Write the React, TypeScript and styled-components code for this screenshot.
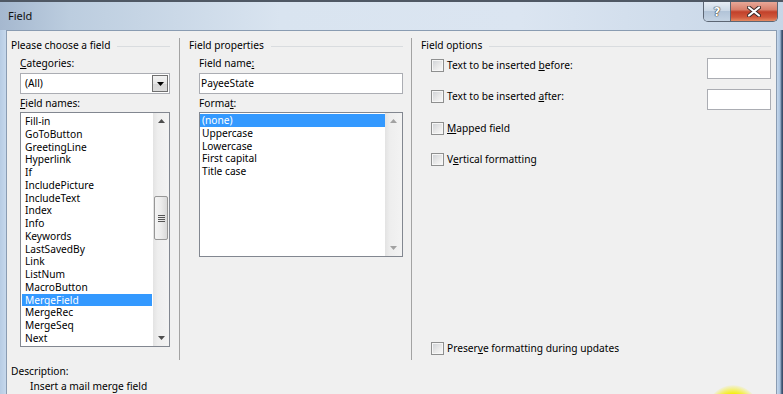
import React from 'react'
import styled, { createGlobalStyle } from 'styled-components'

const GlobalStyle = createGlobalStyle`
  html, body {
    margin: 0;
    padding: 0;
  }
  body {
    width: 783px;
    height: 394px;
    overflow: hidden;
    font-family: "Noto Sans", "Liberation Sans", sans-serif;
    font-size: 10.2px;
    color: #000;
  }
`

const fieldNames = [
    'Fill-in', 'GoToButton', 'GreetingLine', 'Hyperlink', 'If', 'IncludePicture',
    'IncludeText', 'Index', 'Info', 'Keywords', 'LastSavedBy', 'Link', 'ListNum',
    'MacroButton', 'MergeField', 'MergeRec', 'MergeSeq', 'Next',
]

const formats = ['(none)', 'Uppercase', 'Lowercase', 'First capital', 'Title case']

const Arrow = ({ up, color }: { up?: boolean; color: string }) => (
    <svg width="7" height="4" viewBox="0 0 7 4">
        {up
            ? <polygon points="0,4 7,4 3.5,0" fill={color} />
            : <polygon points="0,0 7,0 3.5,4" fill={color} />}
    </svg>
)

const Scroll = ({ thumbTop, disabled, width }: { thumbTop?: number; disabled?: boolean; width: number }) => {
    const c = disabled ? '#a2a2a2' : '#4e4e4e'
    return (
        <Scrollbar $w={width}>
            <ArrowBox><Arrow up color={c} /></ArrowBox>
            <Track>
                {thumbTop !== undefined && (
                    <Thumb $top={thumbTop}>
                        <svg width="7" height="7" viewBox="0 0 7 7">
                            <line x1="0" y1="0.5" x2="7" y2="0.5" stroke="#555" />
                            <line x1="0" y1="2.5" x2="7" y2="2.5" stroke="#555" />
                            <line x1="0" y1="4.5" x2="7" y2="4.5" stroke="#555" />
                            <line x1="0" y1="6.5" x2="7" y2="6.5" stroke="#555" />
                        </svg>
                    </Thumb>
                )}
            </Track>
            <ArrowBox><Arrow color={c} /></ArrowBox>
        </Scrollbar>
    )
}

const App = () => {
    return (
        <Window>
            <GlobalStyle />
            <TitleBar>
                <Title>Field</Title>
                <Caption>
                    <HelpButton>?</HelpButton>
                    <CloseButton>
                        <svg width="14" height="11" viewBox="0 0 14 11">
                            <path d="M2 1.5 L12 9.5 M12 1.5 L2 9.5" stroke="#3b2a28" strokeWidth="4" strokeLinecap="round" />
                            <path d="M2 1.5 L12 9.5 M12 1.5 L2 9.5" stroke="#fff" strokeWidth="2.2" strokeLinecap="round" />
                        </svg>
                    </CloseButton>
                </Caption>
            </TitleBar>

            <Client>
                <Columns>
                    <Column $pad={4} $sep>
                        <Heading $right={9}>Please choose a field</Heading>
                        <ColBody $indent={9}>
                            <Label $top={5}><u>C</u>ategories:</Label>
                            <Combo>
                                <ComboValue>(All)</ComboValue>
                                <DropButton><Arrow color="#000" /></DropButton>
                            </Combo>
                            <Label $top={3}><u>F</u>ield names:</Label>
                            <ListBox $w={150} $h={235}>
                                <ListItems $padTop={2} $padX={1}>
                                    {fieldNames.map((n) => (
                                        <Item key={n} $selected={n === 'MergeField'} $indent={3}>{n}</Item>
                                    ))}
                                </ListItems>
                                <Scroll width={16} thumbTop={67} />
                            </ListBox>
                        </ColBody>
                    </Column>

                    <Column $pad={9} $sep>
                        <Heading $right={8}>Field properties</Heading>
                        <ColBody $indent={10}>
                            <Label $top={5}>Field name<u>:</u></Label>
                            <TextBox $w={204}>PayeeState</TextBox>
                            <Label $top={3}>Forma<u>t</u>:</Label>
                            <ListBox $w={204} $h={145}>
                                <ListItems $padTop={1} $padX={0}>
                                    {formats.map((f) => (
                                        <Item key={f} $selected={f === '(none)'} $indent={2}>{f}</Item>
                                    ))}
                                </ListItems>
                                <Scroll width={17} disabled />
                            </ListBox>
                        </ColBody>
                    </Column>

                    <Column $pad={9}>
                        <Heading $right={5}>Field options</Heading>
                        <OptionsBody $indent={10}>
                            <OptionRow $top={6}>
                                <Check />
                                <OptionLabel>Text to be inserted <u>b</u>efore:</OptionLabel>
                                <SmallInput />
                            </OptionRow>
                            <OptionRow $top={10}>
                                <Check />
                                <OptionLabel>Text to be inserted <u>a</u>fter:</OptionLabel>
                                <SmallInput />
                            </OptionRow>
                            <OptionRow $top={11}>
                                <Check />
                                <OptionLabel><u>M</u>apped field</OptionLabel>
                            </OptionRow>
                            <OptionRow $top={17}>
                                <Check />
                                <OptionLabel>V<u>e</u>rtical formatting</OptionLabel>
                            </OptionRow>
                            <OptionRow $top={0} $bottom>
                                <Check />
                                <OptionLabel>Preser<u>v</u>e formatting during updates</OptionLabel>
                            </OptionRow>
                        </OptionsBody>
                    </Column>
                </Columns>

                <Description>
                    <DescLine>Description:</DescLine>
                    <DescLine $indent={19}>Insert a mail merge field</DescLine>
                </Description>
            </Client>

            <CursorGlow />
        </Window>
    )
}

export default App

const Window = styled.div`
position: relative;
width: 783px;
height: 394px;
overflow: hidden;
display: flex;
flex-direction: column;
background: linear-gradient(to right, #b7cce4 0, #c6d8ec 6px, #c6d8ec 777px, #a9c2de 780px, #3b4f6c 782px);
`
const TitleBar = styled.div`
height: 30px;
flex: none;
box-sizing: border-box;
display: flex;
align-items: flex-start;
border-top: 2px solid #4f5864;
background: linear-gradient(to right, #a5b8cf 0, #bccddf 70px, #d9e4f0 280px, #dbe5f1 520px, #c7d6e7 783px);
`
const Title = styled.div`
padding: 7px 0 0 8px;
line-height: 14px;
font-size: 11px;
color: #111;
`
const Caption = styled.div`
margin-left: auto;
margin-right: 5px;
height: 19px;
display: flex;
border: 1px solid #5c6674;
border-top: none;
border-radius: 0 0 5px 5px;
overflow: hidden;
`
const HelpButton = styled.div`
width: 26px;
display: flex;
align-items: center;
justify-content: center;
border-right: 1px solid #5c6674;
background: linear-gradient(to bottom, #e6edf5 0, #cbd8e6 45%, #b2c4d8 50%, #c4d3e3 100%);
font-family: "DejaVu Sans", sans-serif;
font-weight: bold;
font-size: 12px;
color: #fff;
text-shadow: 0 0 1px #333, 0 0 1px #333, 0 0 1px #333;
`
const CloseButton = styled.div`
width: 46px;
display: flex;
align-items: center;
justify-content: center;
background: linear-gradient(to bottom, #e8a898 0, #d8806c 40%, #c2412a 52%, #d0583c 80%, #e48a62 100%);
`
const Client = styled.div`
flex: 1;
margin: 0 6px;
box-sizing: border-box;
border: 1px solid #8a9cb2;
border-bottom: none;
background: #f0f0f0;
padding-top: 7px;
display: flex;
flex-direction: column;
`
const Columns = styled.div`
display: grid;
grid-template-columns: 173px 232px 1fr;
height: 322px;
`
const Column = styled.div<{ $pad: number; $sep?: boolean }>`
box-sizing: border-box;
padding: 1px 0 0 ${({ $pad }) => $pad}px;
border-right: ${({ $sep }) => ($sep ? '1px solid #a3a3a3' : 'none')};
display: flex;
flex-direction: column;
min-width: 0;
`
const Heading = styled.div<{ $right: number }>`
display: flex;
align-items: center;
gap: 7px;
line-height: 13px;
padding-right: ${({ $right }) => $right}px;
white-space: nowrap;
&::after{
    content: "";
    flex: 1;
    border-top: 1px solid #d9dcdf;
    margin-top: 1px;
}
`
const ColBody = styled.div<{ $indent: number }>`
margin-left: ${({ $indent }) => $indent}px;
display: flex;
flex-direction: column;
align-items: flex-start;
`
const OptionsBody = styled.div<{ $indent: number }>`
margin-left: ${({ $indent }) => $indent}px;
padding-right: 5px;
flex: 1;
display: flex;
flex-direction: column;
`
const Label = styled.div<{ $top: number }>`
margin-top: ${({ $top }) => $top}px;
line-height: 13px;
margin-bottom: 3px;
white-space: nowrap;
`
const Combo = styled.div`
width: 150px;
height: 21px;
box-sizing: border-box;
border: 1px solid #abadb3;
background: #fff;
display: flex;
`
const ComboValue = styled.div`
flex: 1;
padding-left: 4px;
line-height: 19px;
`
const DropButton = styled.div`
width: 16px;
box-sizing: border-box;
margin: 1px;
border: 1px solid #707070;
background: linear-gradient(to bottom, #f3f3f3 0, #e6e6e6 50%, #d6d6d6 51%, #dcdcdc 100%);
display: flex;
align-items: center;
justify-content: center;
`
const TextBox = styled.div<{ $w: number }>`
width: ${({ $w }) => $w}px;
height: 21px;
box-sizing: border-box;
border: 1px solid #abadb3;
background: #fff;
padding-left: 1px;
line-height: 19px;
`
const ListBox = styled.div<{ $w: number; $h: number }>`
width: ${({ $w }) => $w}px;
height: ${({ $h }) => $h}px;
box-sizing: border-box;
border: 1px solid #828790;
background: #fff;
display: flex;
margin-top: -1px;
`
const ListItems = styled.div<{ $padTop: number; $padX: number }>`
flex: 1;
min-width: 0;
padding: ${({ $padTop, $padX }) => `${$padTop}px ${$padX}px 0`};
overflow: hidden;
`
const Item = styled.div<{ $selected?: boolean; $indent: number }>`
height: 12.75px;
line-height: 12.75px;
padding-left: ${({ $indent }) => $indent}px;
white-space: nowrap;
background: ${({ $selected }) => ($selected ? '#3399ff' : 'transparent')};
color: ${({ $selected }) => ($selected ? '#fff' : '#000')};
`
const Scrollbar = styled.div<{ $w: number }>`
width: ${({ $w }) => $w}px;
flex: none;
display: flex;
flex-direction: column;
background: linear-gradient(to right, #e3e3e3 0, #eeeeee 30%, #f3f3f3 100%);
`
const ArrowBox = styled.div`
height: 16px;
flex: none;
display: flex;
align-items: center;
justify-content: center;
`
const Track = styled.div`
flex: 1;
display: flex;
flex-direction: column;
align-items: center;
`
const Thumb = styled.div<{ $top: number }>`
margin-top: ${({ $top }) => $top}px;
width: 14px;
height: 44px;
box-sizing: border-box;
border: 1px solid #979797;
border-radius: 2px;
background: linear-gradient(to right, #f4f4f4 0, #ececec 50%, #d9d9d9 100%);
display: flex;
align-items: center;
justify-content: center;
`
const OptionRow = styled.div<{ $top: number; $bottom?: boolean }>`
display: flex;
align-items: flex-start;
margin-top: ${({ $top, $bottom }) => ($bottom ? 'auto' : `${$top}px`)};
margin-bottom: ${({ $bottom }) => ($bottom ? '5px' : '0')};
`
const Check = styled.div`
width: 13px;
height: 13px;
flex: none;
box-sizing: border-box;
margin-top: 1px;
border: 1px solid #8e8f8f;
box-shadow: inset 0 0 0 1px #f6f6f6;
background: linear-gradient(135deg, #cdd0d4 0, #e9e9e9 55%, #fafafa 100%);
`
const OptionLabel = styled.div`
margin-left: 3px;
margin-top: 0.5px;
line-height: 13px;
white-space: nowrap;
`
const SmallInput = styled.div`
margin-left: auto;
width: 64px;
height: 21px;
box-sizing: border-box;
border: 1px solid #abadb3;
background: #fff;
`
const Description = styled.div`
padding: 4.5px 0 0 4px;
display: flex;
flex-direction: column;
gap: 2px;
`
const DescLine = styled.div<{ $indent?: number }>`
line-height: 13px;
margin-left: ${({ $indent }) => $indent || 0}px;
`
const CursorGlow = styled.div`
position: absolute;
left: 707px;
top: 385px;
width: 52px;
height: 52px;
border-radius: 50%;
background: radial-gradient(circle, #f6ee00 0, #f6ee00 45%, rgba(246, 238, 0, 0) 72%);
`
